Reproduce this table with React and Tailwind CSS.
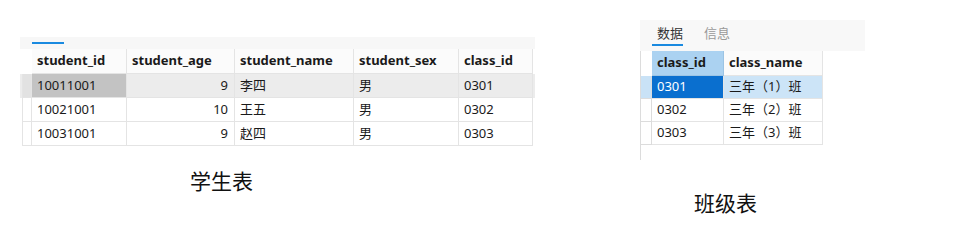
const font = { fontFamily: '"Segoe UI", "Noto Sans", "Noto Sans CJK SC", sans-serif' };

const students = [
  { id: '10011001', age: 9, name: '李四', sex: '男', cls: '0301' },
  { id: '10021001', age: 10, name: '王五', sex: '男', cls: '0302' },
  { id: '10031001', age: 9, name: '赵四', sex: '男', cls: '0303' },
];

const classes = [
  { id: '0301', name: '三年（1）班' },
  { id: '0302', name: '三年（2）班' },
  { id: '0303', name: '三年（3）班' },
];

function StudentTable() {
  const cols = ['w-[95px]', 'w-[108px]', 'w-[119px]', 'w-[105px]', 'w-[74px]'];
  const heads = ['student_id', 'student_age', 'student_name', 'student_sex', 'class_id'];
  return (
    <div className="ml-[20px] mt-[37px] flex w-[515px] flex-col">
      {/* tab strip */}
      <div className="h-[12px] bg-[#f7f7f7] pl-[12px] pt-[5px]">
        <div className="h-[2px] w-[32px] bg-[#1a8ae0]" />
      </div>

      {/* header */}
      <div className="flex h-[25px] pl-[2px] text-[13px] font-bold text-[#1a1a1a]">
        <div className="w-[10px]" />
        {heads.map((h, i) => (
          <div
            key={h}
            className={`${cols[i]} flex items-center border-r border-b border-[#e4e4e4] bg-[#fbfbfb] px-[5px]`}
          >
            {h}
          </div>
        ))}
      </div>

      {/* rows */}
      {students.map((s, r) => {
        const sel = r === 0;
        return (
          <div key={s.id} className={`flex h-[24px] pl-[2px] text-[13px] text-[#1a1a1a] ${sel ? 'bg-[#ececec]' : ''}`}>
            <div className={`w-[10px] border-x border-b border-[#e4e4e4] ${sel ? 'bg-[#e2e2e2]' : 'bg-white'}`} />
            <div className={`${cols[0]} flex items-center border-r border-b border-[#e4e4e4] px-[5px] ${sel ? 'bg-[#c3c3c3]' : ''}`}>
              {s.id}
            </div>
            <div className={`${cols[1]} flex items-center justify-end border-r border-b border-[#e4e4e4] px-[6px]`}>
              {s.age}
            </div>
            <div className={`${cols[2]} flex items-center border-r border-b border-[#e4e4e4] px-[5px]`}>{s.name}</div>
            <div className={`${cols[3]} flex items-center border-r border-b border-[#e4e4e4] px-[5px]`}>{s.sex}</div>
            <div className={`${cols[4]} flex items-center border-r border-b border-[#e4e4e4] px-[5px]`}>{s.cls}</div>
          </div>
        );
      })}

      <div className="mt-[25px] pl-[170px] text-[21px] leading-none text-[#111]">学生表</div>
    </div>
  );
}

function ClassTable() {
  return (
    <div className="ml-[105px] mt-[20px] flex w-[225px] flex-col">
      {/* tabs */}
      <div className="flex h-[31px] items-start gap-[16px] bg-[#f8f8f8] pl-[12px] text-[13px]">
        <div className="flex flex-col">
          <span className="px-[5px] pt-[4px] leading-[19px] text-[#333]">数据</span>
          <div className="mt-[1px] h-[2px] w-[31px] bg-[#1a8ae0]" />
        </div>
        <span className="pt-[4px] leading-[19px] text-[#9a9a9a]">信息</span>
      </div>

      {/* header */}
      <div className="flex h-[25px] text-[13px] font-bold text-[#1a1a1a]">
        <div className="w-[12px] border-l border-[#dcdcdc]" />
        <div className="flex w-[72px] items-center border-b border-r border-[#9cc4e4] bg-[#abd2f1] px-[5px]">class_id</div>
        <div className="flex w-[99px] items-center border-r border-b border-[#e4e4e4] bg-[#fbfbfb] px-[5px]">class_name</div>
      </div>

      {classes.map((c, r) => {
        const sel = r === 0;
        return (
          <div key={c.id} className="flex h-[23px] text-[13px] text-[#1a1a1a]">
            <div className={`w-[12px] border-x border-b border-[#dcdcdc] ${sel ? 'bg-[#c9e2f6]' : 'bg-white'}`} />
            <div className={`flex w-[72px] items-center border-r border-b border-[#e4e4e4] px-[5px] ${sel ? 'bg-[#0a6fcf] text-white' : ''}`}>
              {c.id}
            </div>
            <div className={`flex w-[99px] items-center border-r border-b border-[#e4e4e4] px-[5px] ${sel ? 'bg-[#cce4f7]' : ''}`}>
              {c.name}
            </div>
          </div>
        );
      })}
      <div className="h-[15px] w-[12px] border-l border-[#dcdcdc]" />

      <div className="mt-[33px] pl-[54px] text-[21px] leading-none text-[#111]">班级表</div>
    </div>
  );
}

export default function App() {
  return (
    <div className="flex h-[250px] w-[955px] items-start bg-white" style={font}>
      <StudentTable />
      <ClassTable />
    </div>
  );
}
